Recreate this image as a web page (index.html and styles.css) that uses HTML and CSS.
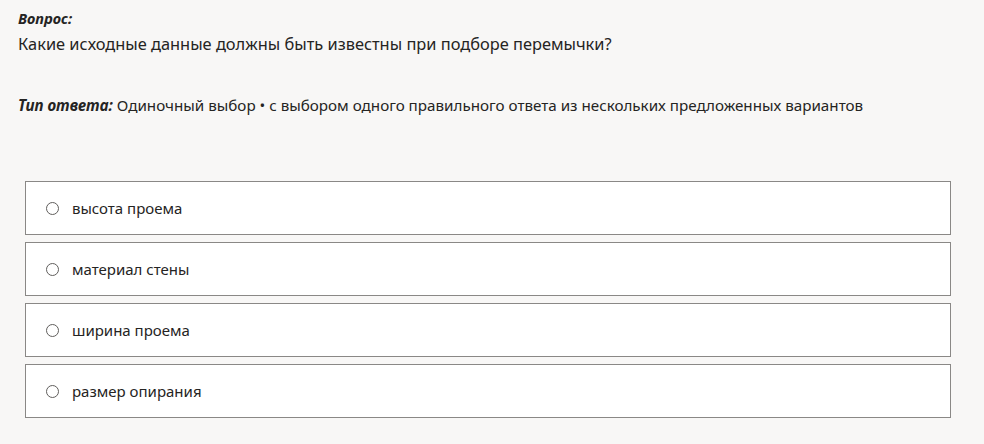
FILE: index.html
```html
<!DOCTYPE html>
<html lang="ru">
<head>
<meta charset="utf-8">
<link rel="stylesheet" href="styles.css">
</head>
<body>
<div class="page">
  <div class="head">
    <div class="label">Вопрос:</div>
    <div class="question">Какие исходные данные должны быть известны при подборе перемычки?</div>
    <div class="type"><span class="label">Тип ответа:</span> Одиночный выбор • с выбором одного правильного ответа из нескольких предложенных вариантов</div>
  </div>
  <div class="options">
    <label class="option"><span class="radio"></span><span>высота проема</span></label>
    <label class="option"><span class="radio"></span><span>материал стены</span></label>
    <label class="option"><span class="radio"></span><span>ширина проема</span></label>
    <label class="option"><span class="radio"></span><span>размер опирания</span></label>
  </div>
</div>
</body>
</html>
```
FILE: styles.css
```css
html, body {
  margin: 0;
  padding: 0;
  background: #f8f7f6;
}
body {
  font-family: "Noto Sans", "Open Sans", sans-serif;
  color: #252423;
}
.page {
  padding: 8px 33px 0 18px;
}
.head {
  display: flex;
  flex-direction: column;
}
.label {
  font-weight: 700;
  font-style: italic;
  font-size: 14.6px;
  line-height: 20px;
}
.question {
  font-size: 16.4px;
  line-height: 24px;
  margin-top: 4px;
}
.type {
  font-size: 15.2px;
  line-height: 20px;
  margin-top: 39px;
}
.type .label {
  font-size: inherit;
}
.options {
  margin-top: 66px;
  margin-left: 7px;
  display: flex;
  flex-direction: column;
  gap: 7px;
}
.option {
  height: 52px;
  border: 1px solid #8a8886;
  background: #fff;
  display: flex;
  align-items: center;
  padding-left: 20px;
  font-size: 15px;
}
.radio {
  width: 11px;
  height: 11px;
  border: 1px solid #605e5c;
  border-radius: 50%;
  margin-right: 13px;
}
```
